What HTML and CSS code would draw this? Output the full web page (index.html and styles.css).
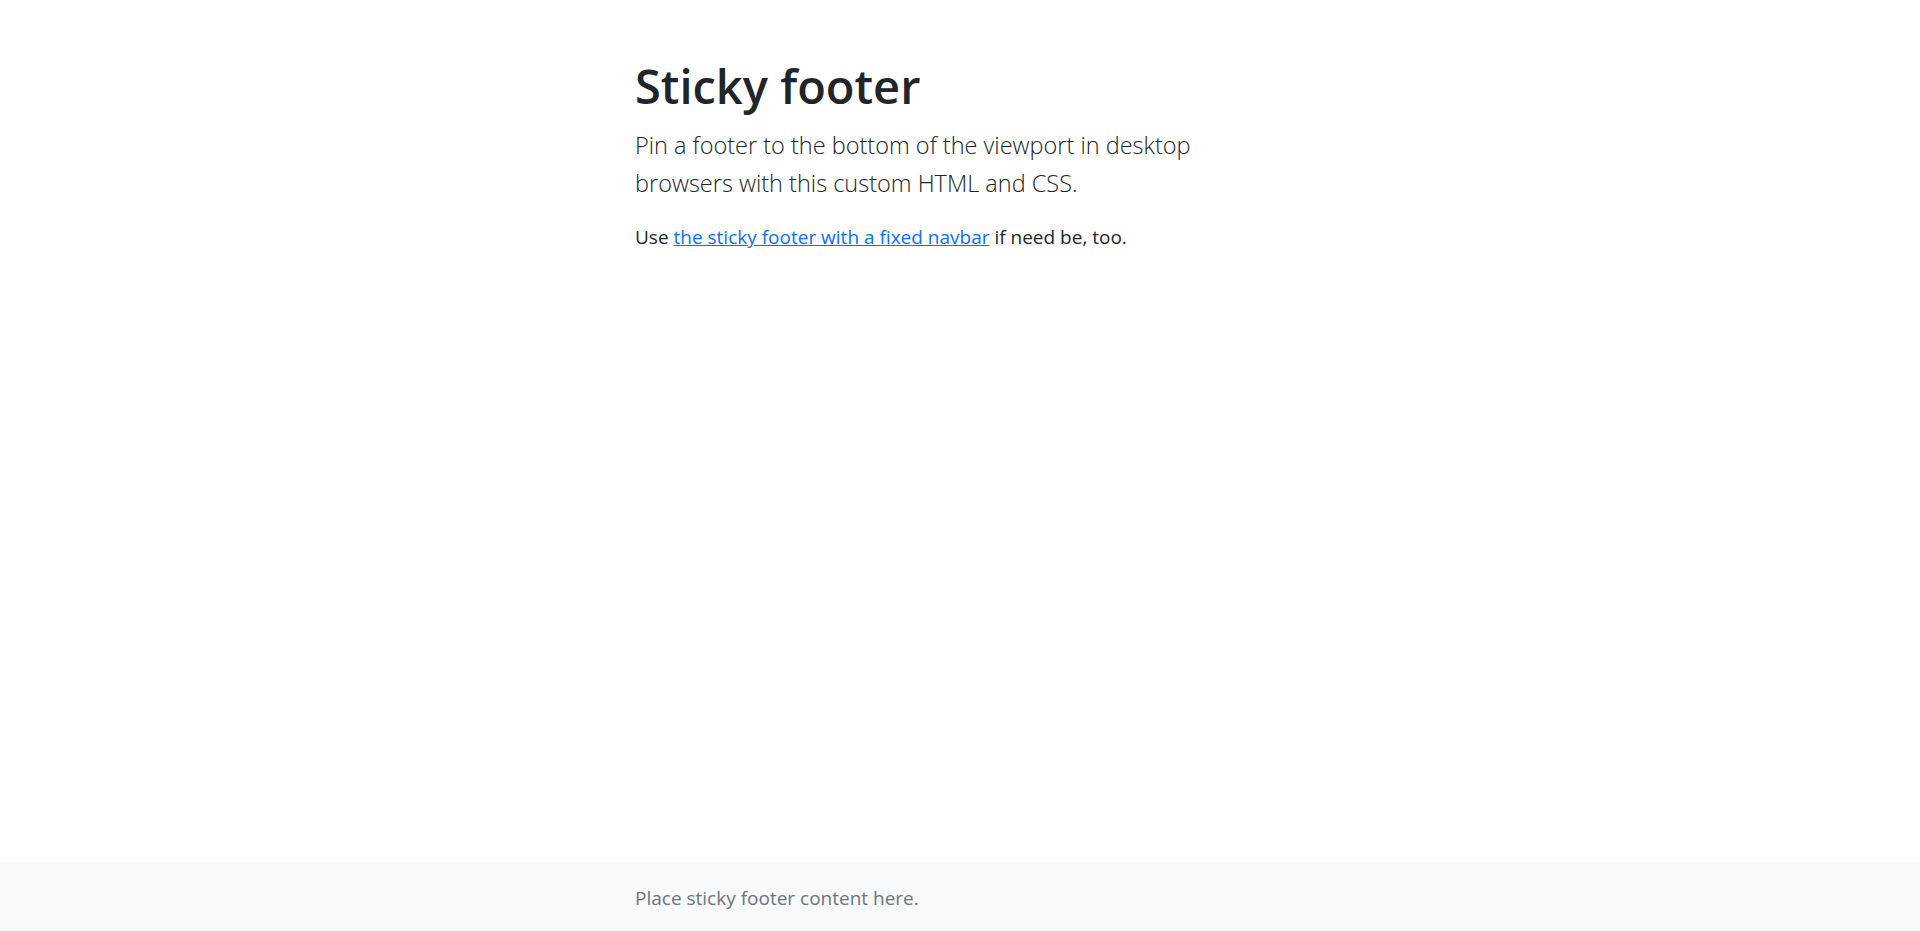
FILE: index.html
```html
<!DOCTYPE html>
<html lang="en">
<head>
<meta charset="utf-8">
<title>Sticky Footer Template</title>
<link rel="stylesheet" href="styles.css">
</head>
<body class="page">
<main class="main">
  <div class="container">
    <h1 class="title">Sticky footer</h1>
    <p class="lead">Pin a footer to the bottom of the viewport in desktop browsers with this custom HTML and CSS.</p>
    <p class="text">Use <a class="link" href="#">the sticky footer with a fixed navbar</a> if need be, too.</p>
  </div>
</main>
<footer class="footer">
  <div class="container">
    <span class="muted">Place sticky footer content here.</span>
  </div>
</footer>
</body>
</html>
```
FILE: styles.css
```css
html, body { height: 100%; }
.page {
  margin: 0;
  display: flex;
  flex-direction: column;
  font-family: "Open Sans", "Noto Sans", sans-serif;
  color: #212529;
  background: #fff;
  font-size: 19px;
  line-height: 30px;
}
.main { flex-shrink: 0; }
.container {
  max-width: 650px;
  margin: 0 auto;
}
.title {
  margin: 56px 0 10px;
  font-size: 47px;
  line-height: 60px;
  font-weight: 600;
  letter-spacing: 0;
}
.lead {
  margin: 0 0 20px;
  font-size: 23.5px;
  line-height: 38px;
  font-weight: 300;
  max-width: 600px;
}
.text { margin: 0 0 20px; }
.link { color: #0d6efd; }
.footer {
  margin-top: auto;
  background: #f8f9fa;
  padding: 21px 0 20px;
  height: 28px;
}
.muted { color: #6c757d; }
```
